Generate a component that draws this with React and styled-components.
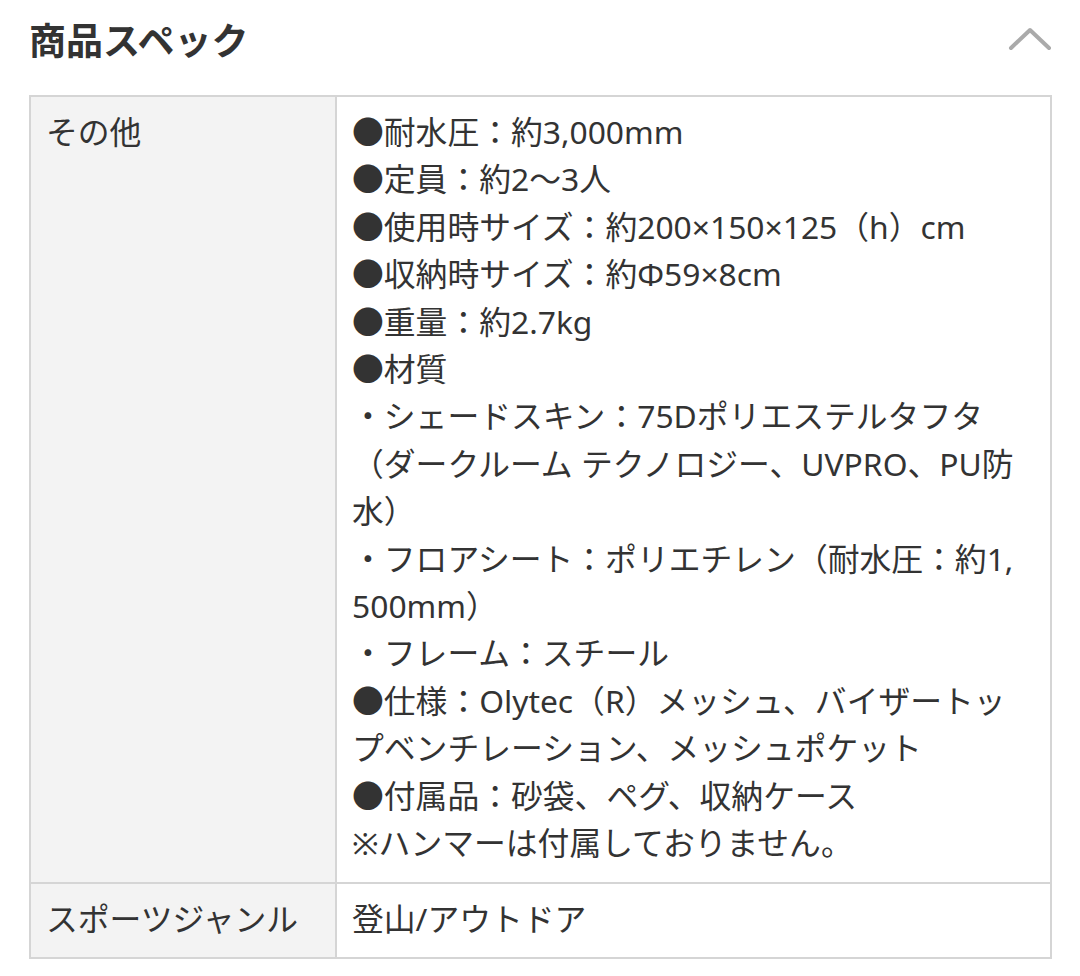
import React from "react";
import styled, { createGlobalStyle } from "styled-components";

const Global = createGlobalStyle`
  html, body { margin: 0; padding: 0; background: #ffffff; }
  body { font-family: "Noto Sans", "Noto Sans CJK JP", sans-serif; color: #333333; }
`;

const Page = styled.div`
  padding: 0 28px 0 29px;
`;

const Header = styled.div`
  display: flex;
  align-items: center;
  justify-content: space-between;
  height: 78px;
  margin-bottom: 17px;
`;

const Title = styled.h2`
  margin: 0;
  font-family: "Noto Sans CJK JP", sans-serif;
  font-weight: 700;
  font-size: 37px;
  line-height: 1;
  color: #333333;
`;

const Chevron = styled.svg`
  width: 44px;
  height: 26px;
`;

const Table = styled.table`
  width: 100%;
  border-collapse: collapse;
  font-size: 31.8px;
  line-height: 47.4px;
`;

const Th = styled.th`
  width: 274px;
  text-align: left;
  vertical-align: top;
  font-weight: 400;
  background: #f3f3f3;
  border: 2px solid #d5d5d5;
  padding: 11px 15px 15px 15px;
  color: #333333;
  white-space: nowrap;
`;

const Td = styled.td`
  vertical-align: top;
  border: 2px solid #d5d5d5;
  padding: 11px 15px 15px 15px;
  color: #333333;
`;

const Item = styled.div`
  white-space: nowrap;
`;

const items = [
  ["●耐水圧：約3,000mm"],
  ["●定員：約2〜3人"],
  ["●使用時サイズ：約200×150×125（h）cm"],
  ["●収納時サイズ：約Φ59×8cm"],
  ["●重量：約2.7kg"],
  ["●材質"],
  ["・シェードスキン：75Dポリエステルタフタ", "（ダークルーム テクノロジー、UVPRO、PU防", "水）"],
  ["・フロアシート：ポリエチレン（耐水圧：約1,", "500mm）"],
  ["・フレーム：スチール"],
  ["●仕様：Olytec（R）メッシュ、バイザートッ", "プベンチレーション、メッシュポケット"],
  ["●付属品：砂袋、ペグ、収納ケース"],
  ["※ハンマーは付属しておりません。"],
];

export default function App() {
  return (
    <Page>
      <Global />
      <Header>
        <Title>商品スペック</Title>
        <Chevron viewBox="0 0 44 26" fill="none">
          <path d="M3 22 L22 4 L41 22" stroke="#aaaaaa" strokeWidth="4" strokeLinecap="round" strokeLinejoin="round" />
        </Chevron>
      </Header>
      <Table>
        <tbody>
          <tr>
            <Th>その他</Th>
            <Td>
              {items.map((parts, i) => (
                <Item key={i}>
                  {parts.map((p, j) => (
                    <React.Fragment key={j}>
                      {j > 0 && <br />}
                      {p}
                    </React.Fragment>
                  ))}
                </Item>
              ))}
            </Td>
          </tr>
          <tr>
            <Th>スポーツジャンル</Th>
            <Td>登山/アウトドア</Td>
          </tr>
        </tbody>
      </Table>
    </Page>
  );
}
